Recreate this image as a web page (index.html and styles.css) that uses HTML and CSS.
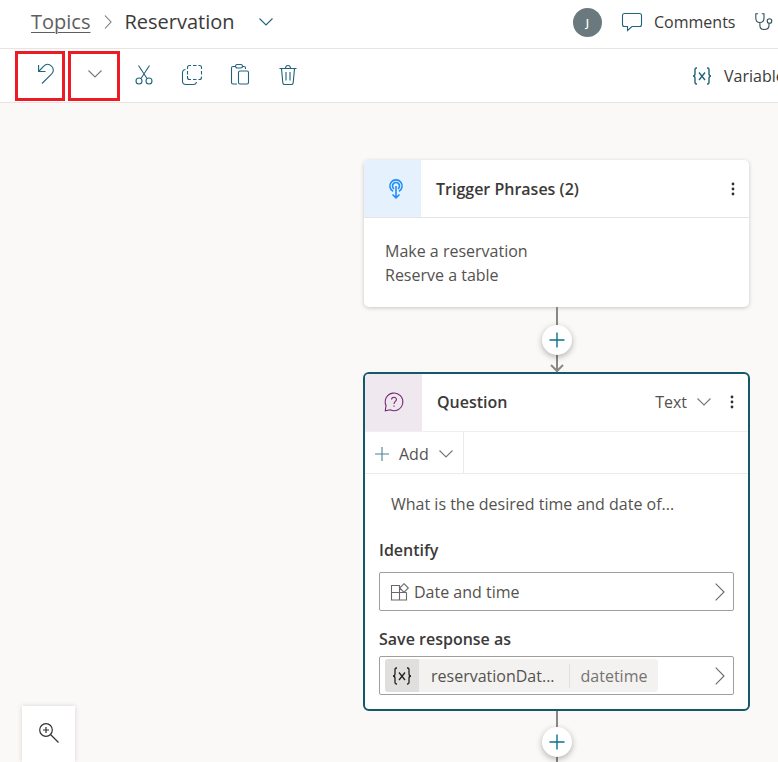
FILE: index.html
```html
<!DOCTYPE html>
<html lang="en">
<head>
<meta charset="utf-8">
<meta name="viewport" content="width=device-width, initial-scale=1">
<title>Reservation</title>
<link rel="stylesheet" href="styles.css">
</head>
<body>
<header class="topbar">
  <nav class="crumbs">
    <a class="crumb-link" href="#">Topics</a>
    <svg class="crumb-sep" width="8" height="14" viewBox="0 0 8 14"><path d="M1 .5 7 7 1 13.500"/></svg>
    <h1 class="crumb-current">Reservation</h1>
    <button class="plain crumb-menu" aria-label="Switch topic"><svg width="14" height="8" viewBox="0 0 14 8"><path d="M.5.5 7 7 13.500.5"/></svg></button>
  </nav>
  <div class="top-actions">
    <span class="avatar">J</span>
    <button class="plain action">
      <svg width="20" height="20" viewBox="0 0 20 20"><path d="M2.500 1.500h15a2 2 0 0 1 2 2v9a2 2 0 0 1-2 2H10L5.500 18.500v-4h-3a2 2 0 0 1-2-2v-9a2 2 0 0 1 2-2z"/></svg>
      <span>Comments</span>
    </button>
    <button class="plain action" aria-label="Topic checker">
      <svg class="dark" width="18" height="18" viewBox="0 0 18 18"><path d="M3 .8H.8V5c0 3 1.700 4.500 4 4.500S9 8 9 5V.8H6.800M4.900 9.500v3c0 2.500 1.500 4 4.200 4s4.900-1.500 4.900-4v-2"/><circle cx="14.500" cy="8" r="2.300"/></svg>
    </button>
  </div>
</header>

<div class="toolbar" role="toolbar">
  <button class="plain tool marked" aria-label="Undo"><svg width="16" height="20" viewBox="0 0 16 20"><path d="M.6 1v6.500h6.900M.6 7.500 5.500 2.300c2.400-2.400 5.600-2.400 8-.2s2.400 5.500.2 7.800L4 19.500"/></svg></button>
  <button class="plain tool marked marked-wide" aria-label="Undo history"><svg width="14" height="8" viewBox="0 0 14 8"><path class="grey" d="M.5.5 7 7 13.500.5"/></svg></button>
  <button class="plain tool" aria-label="Cut"><svg width="18" height="20" viewBox="0 0 18 20"><path d="M3.500.5 12 13.500M14.500.5 6 13.500"/><circle cx="4" cy="16" r="3"/><circle cx="14" cy="16" r="3"/></svg></button>
  <button class="plain tool" aria-label="Copy"><svg width="20" height="20" viewBox="0 0 20 20"><path d="M5.500 4V2.500a2 2 0 0 1 2-2H9M11 .5h3.500M16.500.5h1a2 2 0 0 1 2 2V4M19.500 6v3.500M19.500 11.500v1a2 2 0 0 1-2 2h-1M14.500 14.500H11M9 14.500H7.500a2 2 0 0 1-2-2v-1.500M5.500 9.500V6"/><path d="M3.500 4.500a3 3 0 0 0-3 3v9a3 3 0 0 0 3 3h8a3 3 0 0 0 3-2.500"/></svg></button>
  <button class="plain tool" aria-label="Paste"><svg width="18" height="21" viewBox="0 0 18 21"><path d="M4.500 2.500H2a1.500 1.500 0 0 0-1.500 1.500v14.500A1.500 1.500 0 0 0 2 20h4M11.500 2.500H13A1.500 1.500 0 0 1 14.500 4v1"/><rect x="4.500" y=".5" width="7" height="3.500" rx="1.700"/><rect x="7.500" y="7" width="10" height="13" rx="1.500"/></svg></button>
  <button class="plain tool" aria-label="Delete"><svg width="18" height="20" viewBox="0 0 18 20"><path d="M.5 3.500h17M6.500 3.500c0-4 5-4 5 0M2.500 3.500l1.300 14.300a2 2 0 0 0 2 1.700h6.400a2 2 0 0 0 2-1.700l1.300-14.300M7 7v8.500M11 7v8.500"/></svg></button>
  <button class="plain action variables">
    <svg width="20" height="18" viewBox="0 0 20 18"><path class="heavy" d="M5 1h-.5Q3 1 3 2.500v4.300Q3 9 1 9q2 0 2 2.200v4.300Q3 17 4.500 17H5M15 1h.5Q17 1 17 2.500v4.300Q17 9 19 9q-2 0-2 2.200v4.300q0 1.500-1.500 1.500H15M7 5.500l6 7.500M13 5.500 7 13"/></svg>
    <span>Variables</span>
  </button>
</div>

<main class="canvas">
  <div class="flow">
    <section class="card">
      <div class="card-head">
        <span class="badge badge-blue"><svg width="14" height="20" viewBox="0 0 14 20"><path d="M4 12.300A6.100 6.100 0 1 1 10 12.300M5 9.800A3.500 3.500 0 1 1 9 9.800M7 7v11.500M3.500 15.500 7 18.800l3.500-3.300"/></svg></span>
        <h2 class="card-title">Trigger Phrases (2)</h2>
        <button class="plain more" aria-label="More"><svg width="4" height="14" viewBox="0 0 4 14"><circle cx="2" cy="2" r="1.400"/><circle cx="2" cy="7" r="1.400"/><circle cx="2" cy="12" r="1.400"/></svg></button>
      </div>
      <p class="phrases">Make a reservation<br>Reserve a table</p>
    </section>

    <div class="link">
      <button class="plain add-node" aria-label="Add node"><svg width="16" height="16" viewBox="0 0 16 16"><path d="M8 .5v15M.5 8h15"/></svg></button>
      <svg class="arrow" width="14" height="8" viewBox="0 0 14 8"><path d="M1 1l6 6 6-6"/></svg>
    </div>

    <section class="card selected">
      <div class="card-head">
        <span class="badge badge-plum"><svg width="20" height="20" viewBox="0 0 20 20"><path d="M1.300 18.700 2 13.500a8.800 8.800 0 1 1 4.200 4.300zM7.600 7.500c0-3 4.800-3 4.800 0 0 2-2.400 2-2.400 4.500M10 13.500v1.200"/></svg></span>
        <h2 class="card-title">Question</h2>
        <button class="plain kind"><span>Text</span><svg width="14" height="8" viewBox="0 0 14 8"><path d="M.5.5 7 7 13.500.5"/></svg></button>
        <button class="plain more" aria-label="More"><svg width="4" height="14" viewBox="0 0 4 14"><circle cx="2" cy="2" r="1.400"/><circle cx="2" cy="7" r="1.400"/><circle cx="2" cy="12" r="1.400"/></svg></button>
      </div>
      <div class="add-row">
        <button class="plain add"><svg class="plus" width="14" height="14" viewBox="0 0 14 14"><path d="M7 0v14M0 7h14"/></svg><span>Add</span><svg width="14" height="8" viewBox="0 0 14 8"><path d="M.5.5 7 7 13.500.5"/></svg></button>
      </div>
      <div class="card-body">
        <p class="prompt">What is the desired time and date of...</p>
        <h3 class="label" id="identify">Identify</h3>
        <button class="plain field" aria-describedby="identify">
          <svg class="entity" width="18" height="18" viewBox="0 0 18 18"><path d="M9 2.500H.5V17h15V9.500M.5 9.500h15M8.500 2.500V17M13 .7l4.300 4.300L13 9.300 8.700 5z"/></svg>
          <span>Date and time</span>
          <svg class="go" width="10" height="18" viewBox="0 0 10 18"><path d="M.7.7 9 9 .7 17.300"/></svg>
        </button>
        <h3 class="label" id="save">Save response as</h3>
        <button class="plain field" aria-describedby="save">
          <span class="chip"><span class="chip-icon"><svg width="20" height="18" viewBox="0 0 20 18"><path d="M5 1h-.5Q3 1 3 2.500v4.300Q3 9 1 9q2 0 2 2.200v4.300Q3 17 4.500 17H5M15 1h.5Q17 1 17 2.500v4.300Q17 9 19 9q-2 0-2 2.200v4.300q0 1.500-1.500 1.500H15M7 5.500l6 7.500M13 5.500 7 13"/></svg></span><span class="chip-name">reservationDat...</span><span class="chip-type">datetime</span></span>
          <svg class="go" width="10" height="18" viewBox="0 0 10 18"><path d="M.7.7 9 9 .7 17.300"/></svg>
        </button>
      </div>
    </section>

    <div class="link link-last">
      <button class="plain add-node" aria-label="Add node"><svg width="16" height="16" viewBox="0 0 16 16"><path d="M8 .5v15M.5 8h15"/></svg></button>
    </div>
  </div>
  <div class="zoom-panel">
    <button class="plain" aria-label="Zoom in"><svg width="20" height="20" viewBox="0 0 20 20"><circle cx="7" cy="7" r="6.300"/><path d="M11.500 11.500 19.500 19.500M7 4v6M4 7h6"/></svg></button>
  </div>
</main>
</body>
</html>
```
FILE: styles.css
```css
* { box-sizing: border-box; }

body {
  margin: 0;
  height: 100vh;
  display: flex;
  flex-direction: column;
  overflow: hidden;
  background: #fff;
  color: #3b3a39;
  font: 16px/24px "Open Sans", "Noto Sans", sans-serif;
}

h1, h2, h3, p { margin: 0; }

svg {
  flex: none;
  display: block;
  fill: none;
  stroke: #20637a;
  stroke-width: 1.1;
  overflow: visible;
}

.grey { stroke: #777; }
.heavy { stroke-width: 1.4; }
.dark { stroke: #31505c; }

.plain {
  display: flex;
  align-items: center;
  padding: 0;
  border: 0;
  background: none;
  color: inherit;
  font: inherit;
  white-space: nowrap;
}

.topbar {
  flex: none;
  display: flex;
  height: 49px;
  border-bottom: 1px solid #e6e5e4;
}

.crumbs {
  flex: 0 0 573px;
  display: flex;
  align-items: center;
  padding: 0 0 4px 31px;
  font-size: 20px;
  line-height: 28px;
}

.crumb-link {
  color: #605e5c;
  text-underline-offset: 3px;
  text-decoration-thickness: 1px;
}

.crumb-sep { margin: 0 12px 0 14px; }
.crumb-sep path { stroke: #777; }
.crumb-current { font-size: 20px; font-weight: 400; line-height: 28px; }
.crumb-menu { margin-left: 24px; }

.top-actions {
  flex: none;
  display: flex;
  align-items: center;
  padding-bottom: 4px;
  gap: 20px;
}

.avatar {
  width: 29px;
  height: 29px;
  border-radius: 50%;
  background: #69797e;
  color: #fff;
  font-size: 11px;
  font-weight: 600;
  line-height: 29px;
  text-align: center;
}

.action { gap: 12px; }

.toolbar {
  flex: none;
  display: flex;
  align-items: center;
  height: 54px;
  padding-left: 15px;
  border-bottom: 1px solid #e6e5e4;
}

.tool {
  flex: none;
  justify-content: center;
  width: 48px;
  height: 50px;
  padding-bottom: 2px;
}

.marked { width: 50px; border: 3px solid #ed1c24; padding: 0 0 3px 12px; }
.marked-wide { width: 52px; margin-left: 3px; padding: 0 0 3px 2px; }

.variables { flex: none; margin-left: 380px; }

.canvas {
  flex: 1;
  position: relative;
  min-height: 0;
  overflow: hidden;
  padding: 57px 28px 0 363px;
  background: #faf9f8;
}

.flow {
  display: flex;
  flex-direction: column;
  align-items: center;
}

.card {
  width: calc(100% - 2px);
  border-radius: 5px;
  background: #fff;
  box-shadow: 0 1px 4px rgba(0, 0, 0, .2);
}

.selected {
  width: 100%;
  border: 2px solid #14586c;
  border-radius: 6px;
  box-shadow: none;
}

.card-head {
  display: flex;
  align-items: center;
  height: 58px;
  padding-right: 14px;
  border-bottom: 1px solid #e6e5e4;
}

.selected .card-head { border-color: #f0efee; }
.selected .card-title, .selected .kind, .selected .more { padding-bottom: 2px; }

.badge {
  align-self: stretch;
  display: flex;
  align-items: center;
  justify-content: center;
  width: 57px;
  margin-right: 15px;
}

.badge-blue { background: #e5f1fd; border-radius: 5px 0 0; padding-left: 7px; }
.badge-blue svg { stroke: #1f8efa; stroke-width: 1.6; }
.badge-plum { background: #efe8ee; border-radius: 4px 0 0; padding-bottom: 2px; }
.badge-plum svg { stroke: #742774; }

.card-title { flex: 1; font-size: 16px; font-weight: 600; line-height: 24px; }

.more svg { fill: #323130; stroke: none; }

.phrases { padding: 21px 21px 20px; color: #54524f; }

.link {
  position: relative;
  display: flex;
  align-items: center;
  justify-content: center;
  width: 30px;
  height: 65px;
  background: linear-gradient(#8a8886, #8a8886) center / 2px 100% no-repeat;
}

.link-last { height: 61px; }

.add-node {
  width: 30px;
  height: 30px;
  justify-content: center;
  border-radius: 50%;
  background: #fff;
  box-shadow: 0 2px 6px rgba(0, 0, 0, .3);
}

.add-node svg { stroke: #0b7189; stroke-width: 1.4; }

.arrow { position: absolute; left: 8px; bottom: 0; stroke: #8a8886; stroke-width: 2; }

.kind { gap: 10px; margin-right: 19px; color: #54524f; }
.kind svg, .add svg { stroke: #777; }

.add-row {
  display: flex;
  height: 42px;
  border-bottom: 1px solid #edebe9;
}

.add {
  gap: 10px;
  padding: 2px 10px 0;
  border-right: 1px solid #edebe9;
  color: #54524f;
}

.add .plus { stroke: #4c8292; }

.card-body { padding: 18px 14px 14px; }

.prompt { padding-left: 12px; margin-bottom: 22px; color: #54524f; }

.label { font-size: 16px; font-weight: 600; line-height: 24px; margin-bottom: 10px; }

.field {
  width: 100%;
  height: 39px;
  gap: 5px;
  padding: 0 8px 0 11px;
  border: 1px solid #a19f9d;
  border-radius: 2px;
  color: #54524f;
}

.field + .label { margin-top: 16px; margin-bottom: 5px; }

.entity, .go { stroke: #6b6967; }
.go { margin-left: auto; }

.chip {
  display: flex;
  align-items: center;
  height: 33px;
  margin-left: -6px;
  border-radius: 3px;
  background: #f3f2f1;
  overflow: hidden;
}

.chip-icon {
  display: flex;
  align-items: center;
  justify-content: center;
  width: 34px;
  height: 33px;
  background: #e1dfdd;
}

.chip-icon svg { stroke: #201f1e; stroke-width: 1.3; }
.chip-name { padding: 0 14px 0 12px; border-right: 1px solid #e1dfdd; }
.chip-type { padding: 0 11px; color: #757371; }

.zoom-panel {
  position: absolute;
  left: 22px;
  bottom: 0;
  display: flex;
  justify-content: center;
  width: 53px;
  height: 56px;
  padding-bottom: 3px;
  background: #fff;
  box-shadow: 0 0 5px rgba(0, 0, 0, .15);
}

.zoom-panel svg { stroke: #323130; stroke-width: 1.2; }
```
